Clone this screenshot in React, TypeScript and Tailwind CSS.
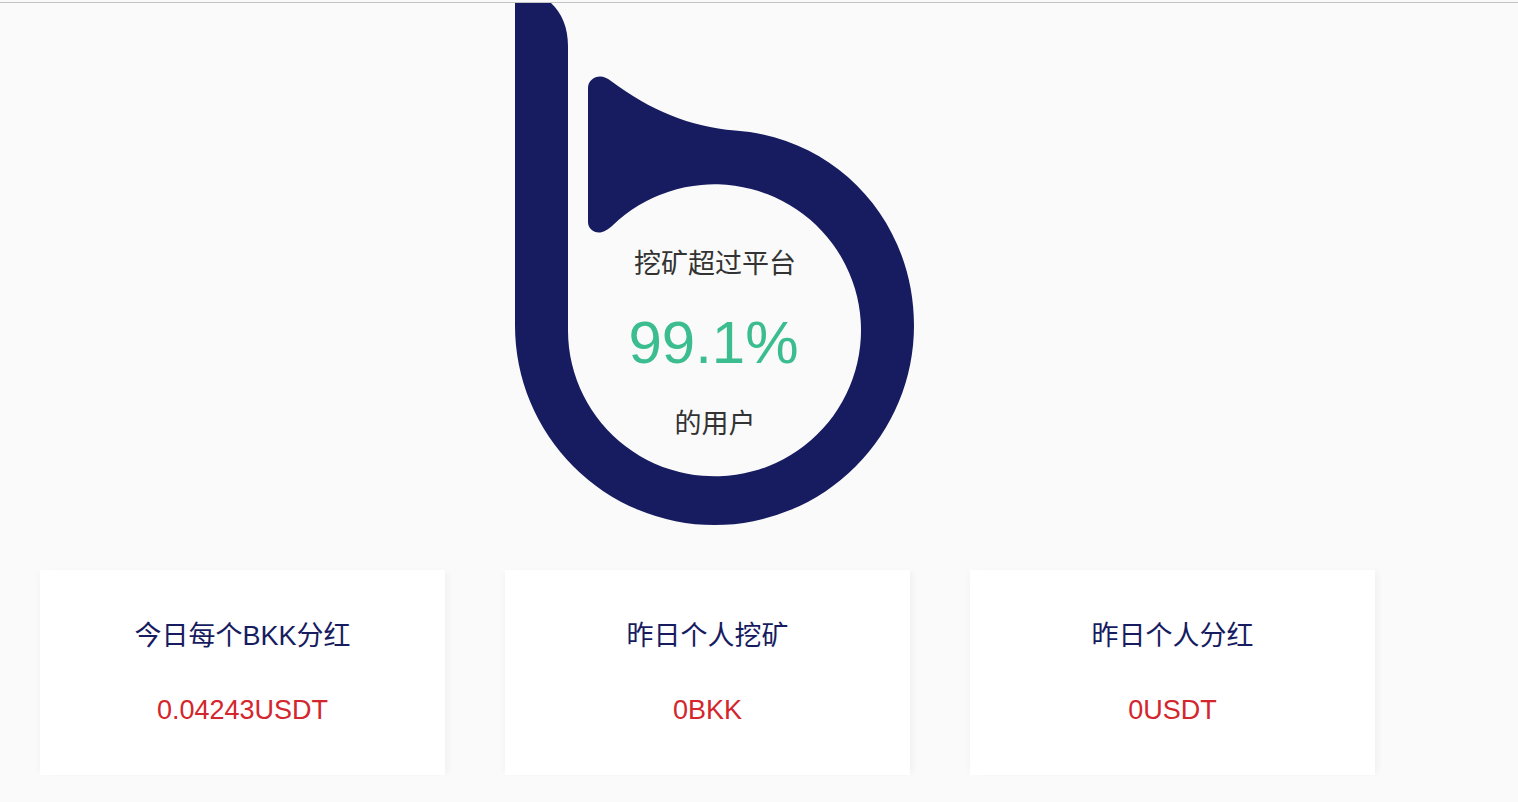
import React from "react";

const font = { fontFamily: '"Liberation Sans", "Noto Sans CJK SC", sans-serif' };

const cards = [
  { title: "今日每个BKK分红", value: "0.04243USDT" },
  { title: "昨日个人挖矿", value: "0BKK" },
  { title: "昨日个人分红", value: "0USDT" },
];

function Logo() {
  return (
    <svg width="400" height="523" viewBox="515 3 400 523" className="block">
      <path
        fill="#171c61"
        fillRule="evenodd"
        d="M515 3 L551 3 C562 13 568 28 568 46 L568 331
           A146.5 146 0 1 0 612 226
           C606 231 602 232.5 599 232.5
           C593 232.5 588 228 588 222
           L588 88
           C588 81 594 76.5 600 76.5
           C604 76.5 607 78 611 81
           C650 110 690 127 735 130.5
           C838 138 914 222 914 325.5
           A199.5 199.5 0 0 1 515 325.5 Z"
      />
    </svg>
  );
}

export default function App() {
  return (
    <div className="h-[802px] overflow-hidden bg-[#fafafa] pt-[2px]" style={font}>
      <div className="border-t border-[#c4c4c4]">
        <div className="relative ml-[515px] w-[400px]">
          <Logo />
          <div className="absolute left-0 top-[242px] flex w-[400px] flex-col items-center">
            <div className="h-[38px] text-[27px] leading-[38px] text-[#333333]">挖矿超过平台</div>
            <div className="mt-[20px] h-[80px] pr-[3px] text-[60px] leading-[80px] text-[#3bbd8f]">99.1%</div>
            <div className="mt-[22px] h-[38px] text-[27px] leading-[38px] text-[#333333]">的用户</div>
          </div>
        </div>
        <div className="mt-[44px] flex gap-[60px] pl-[40px]">
          {cards.map((c) => (
            <div
              key={c.title}
              className="flex h-[205px] w-[405px] flex-col items-center bg-white pt-[47px] shadow-[5px_0_6px_-2px_rgba(0,0,0,0.04),-4px_0_6px_-2px_rgba(0,0,0,0.025)]"
            >
              <div className="h-[38px] text-[27px] leading-[38px] text-[#171c61]">{c.title}</div>
              <div className="mt-[36px] h-[38px] text-[27px] leading-[38px] text-[#d3262d]">{c.value}</div>
            </div>
          ))}
        </div>
      </div>
    </div>
  );
}
